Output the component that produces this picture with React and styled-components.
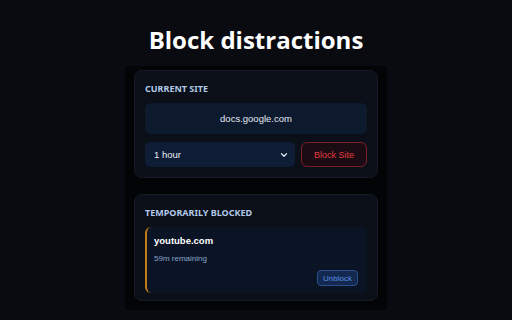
import React from 'react';
import styled, { createGlobalStyle } from 'styled-components';

const Global = createGlobalStyle`
  html, body {
    margin: 0;
    padding: 0;
    background: #0a0b10;
  }
  * { box-sizing: border-box; }
`;

const Page = styled.div`
  width: 512px;
  height: 320px;
  overflow: hidden;
  display: flex;
  flex-direction: column;
  align-items: center;
  background: #0a0b10;
  font-family: 'Liberation Sans', Arial, sans-serif;
`;

const Title = styled.h1`
  margin: 22px 0 0;
  height: 44px;
  font-family: 'Open Sans', sans-serif;
  font-weight: 700;
  font-size: 24px;
  line-height: 36px;
  color: #ffffff;
`;

const Panel = styled.div`
  width: 262px;
  height: 244px;
  background: #030406;
  padding: 4px 9px 9px;
  display: flex;
  flex-direction: column;
  gap: 16px;
`;

const Card = styled.section`
  background: #0a0f18;
  border: 1px solid #151c28;
  border-radius: 8px;
  padding: 12px 10px 10px;
  height: ${(p) => p.h}px;
`;

const Label = styled.div`
  font-family: 'Noto Sans', sans-serif;
  font-size: 9px;
  font-weight: 700;
  color: #b2c8e6;
  text-transform: uppercase;
  margin-bottom: 8px;
  line-height: 12px;
`;

const SiteBox = styled.div`
  height: 31px;
  background: #0d1a2e;
  border-radius: 6px;
  display: flex;
  align-items: center;
  justify-content: center;
  color: #e4e9f0;
  font-size: 9.5px;
`;

const Row = styled.div`
  display: flex;
  gap: 6px;
  margin-top: 8px;
`;

const Select = styled.div`
  flex: 1;
  height: 25px;
  background: #0e1d35;
  border-radius: 5px;
  display: flex;
  align-items: center;
  justify-content: space-between;
  padding: 0 6px 0 9px;
  color: #e8edf4;
  font-size: 9.5px;
`;

const Button = styled.button`
  font-family: inherit;
  cursor: pointer;
  border-radius: ${(p) => (p.small ? 4 : 6)}px;
  border: 1px solid ${(p) => p.line};
  background: ${(p) => p.bg};
  color: ${(p) => p.fg};
  font-size: ${(p) => (p.small ? 8 : 9)}px;
  padding: 0 ${(p) => (p.small ? 5 : 12)}px;
  height: ${(p) => (p.small ? 16 : 25)}px;
`;

const Item = styled.div`
  margin-top: 2px;
  height: 66px;
  background: #0b1424;
  border-left: 2px solid #c47d12;
  border-radius: 6px;
  padding: 7px 9px 0 7px;
  display: flex;
  flex-direction: column;
`;

const ItemName = styled.div`
  color: #ffffff;
  font-weight: 700;
  font-size: 9.5px;
  line-height: 14px;
`;

const ItemTime = styled.div`
  color: #86a4cc;
  font-size: 8px;
  margin-top: 5px;
  line-height: 11px;
`;

const ItemActions = styled.div`
  display: flex;
  justify-content: flex-end;
  margin-top: 6px;
`;

const Chevron = () => (
  <svg width="10" height="10" viewBox="0 0 24 24" fill="none" stroke="#dfe6ef" strokeWidth="3" strokeLinecap="round" strokeLinejoin="round">
    <path d="M6 9l6 6 6-6" />
  </svg>
);

export default function App() {
  return (
    <>
      <Global />
      <Page>
        <Title>Block distractions</Title>
        <Panel>
          <Card h={108}>
            <Label>Current Site</Label>
            <SiteBox>docs.google.com</SiteBox>
            <Row>
              <Select>
                <span>1 hour</span>
                <Chevron />
              </Select>
              <Button bg="#1a0c12" line="#7a1f29" fg="#e2393f">Block Site</Button>
            </Row>
          </Card>
          <Card h={107}>
            <Label>Temporarily Blocked</Label>
            <Item>
              <ItemName>youtube.com</ItemName>
              <ItemTime>59m remaining</ItemTime>
              <ItemActions>
                <Button small bg="#12284f" line="#2b4f8c" fg="#5a8ee2">Unblock</Button>
              </ItemActions>
            </Item>
          </Card>
        </Panel>
      </Page>
    </>
  );
}
